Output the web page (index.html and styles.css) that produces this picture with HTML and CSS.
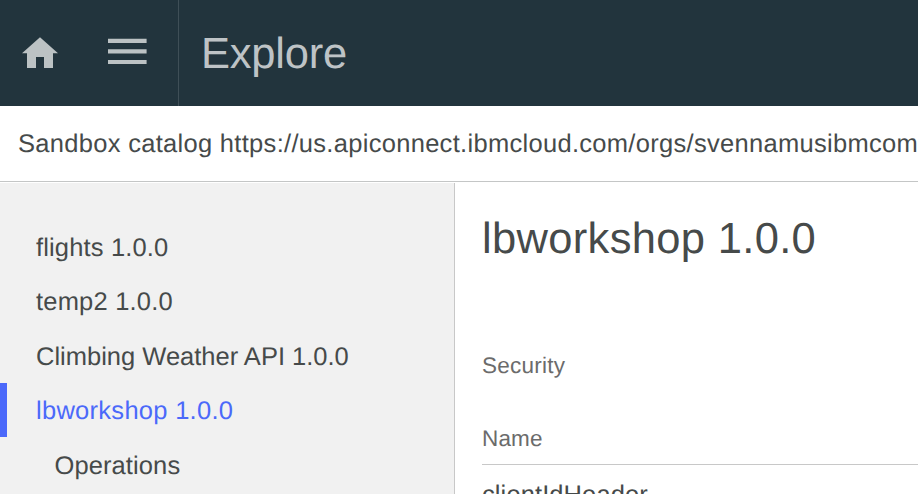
FILE: index.html
```html
<!DOCTYPE html>
<html lang="en">
<head>
<meta charset="utf-8">
<title>Explore</title>
<link rel="stylesheet" href="styles.css">
</head>
<body>
<header class="topbar">
  <div class="tools">
    <svg class="home" viewBox="0 0 36 32" width="36" height="32"><path d="M18 0.3L36 16.2H31V31H22V20H14V31H5V16.2H0Z"/></svg>
    <svg class="menu" viewBox="0 0 39 28" width="39" height="28"><path d="M0 1.7H38.6V5.9H0ZM0 12.2H38.6V16.5H0ZM0 22.9H38.6V27H0Z"/></svg>
  </div>
  <div class="brand"><span class="t-explore">Explore</span></div>
</header>
<div class="catalog"><span class="t-catalog">Sandbox catalog https://us.apiconnect.ibmcloud.com/orgs/svennamusibmcom</span></div>
<div class="content">
  <nav class="sidebar">
    <div class="item"><span class="t-flights">flights 1.0.0</span></div>
    <div class="item"><span class="t-temp">temp2 1.0.0</span></div>
    <div class="item"><span class="t-climb">Climbing Weather API 1.0.0</span></div>
    <div class="item selected"><span class="t-lb">lbworkshop 1.0.0</span></div>
    <div class="item nested"><span class="t-ops">Operations</span></div>
  </nav>
  <main class="detail">
    <h1><span class="t-title">lbworkshop 1.0.0</span></h1>
    <div class="label"><span class="t-security">Security</span></div>
    <div class="label column"><span class="t-name">Name</span></div>
    <div class="value"><span class="t-client">clientIdHeader</span></div>
  </main>
</div>
</body>
</html>
```
FILE: styles.css
```css
* { box-sizing: border-box; }
body {
  margin: 0;
  height: 494px;
  overflow: hidden;
  display: flex;
  flex-direction: column;
  background: #fff;
  color: #464a4a;
  font: 25.5px "Liberation Sans", Arial, sans-serif;
  white-space: nowrap;
  text-rendering: geometricPrecision;
}
.topbar {
  flex: none;
  display: flex;
  height: 106px;
  background: #22343d;
  color: #bec3c6;
}
.tools {
  width: 179px;
  padding: 37px 0 0 22px;
  display: flex;
  gap: 50px;
  border-right: 1px solid #3f4f57;
}
.tools svg { flex: none; fill: #bcc2c4; }
.brand { padding-left: 201px; margin-left: -179px; font-size: 43.5px; line-height: 108px; }
.catalog {
  flex: none;
  height: 76px;
  margin-bottom: 1px;
  padding-left: 18px;
  line-height: 77px;
  border-bottom: 1px solid #c4c6c6;
}
.content { flex: 1; min-height: 0; display: flex; }
.sidebar {
  flex: none;
  width: 455px;
  padding-top: 36.5px;
  background: #f1f1f1;
  border-right: 1px solid #c8c8c8;
}
.item { height: 54.5px; padding-left: 36px; line-height: 56.5px; }
.selected { height: 54px; margin-bottom: 0.5px; padding-left: 29px; border-left: 7px solid #4b69fa; color: #4b69fa; }
.nested { padding-left: 54.5px; }
.detail { flex: 1; padding: 31px 0 0 27px; }
h1 { margin: 0; font-size: 43.5px; font-weight: 400; line-height: 50px; }
.label { margin-top: 87px; font-size: 22.5px; line-height: 30px; color: #6b6b6b; }
.column { margin-top: 43px; height: 41px; border-bottom: 1px solid #c8c8c8; }
.value { padding-top: 15px; line-height: 30px; }
.t-explore { letter-spacing: -0.2px; }
.t-catalog { letter-spacing: 0.3px; }
.t-flights { letter-spacing: 0.15px; }
.t-temp { letter-spacing: 0.2px; }
.t-lb { letter-spacing: 0.28px; }
.t-ops { letter-spacing: 0.1px; }
.t-title { letter-spacing: 0.33px; }
.t-security { letter-spacing: 0.25px; }
.t-name { letter-spacing: 0.15px; }
.t-client { letter-spacing: 0.1px; }
```
